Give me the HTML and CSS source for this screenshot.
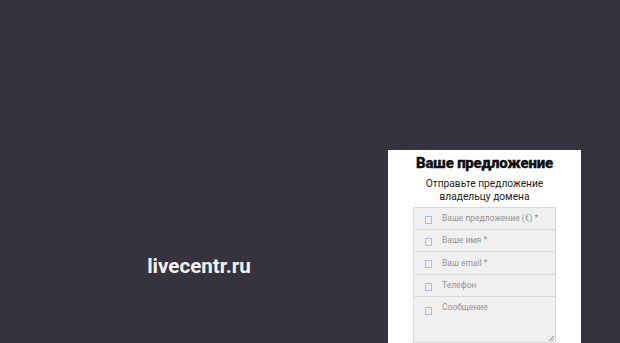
FILE: index.html
```html
<!DOCTYPE html>
<html lang="ru">
<head>
<meta charset="utf-8">
<link rel="stylesheet" href="styles.css">
</head>
<body>
<div class="page">
  <div class="left">
    <div class="domain">livecentr.ru</div>
  </div>
  <div class="card">
    <h1 class="title">Ваше предложение</h1>
    <p class="subtitle">Отправьте предложение<br>владельцу домена</p>
    <div class="form">
      <div class="field"><span class="ico"></span><span class="ph">Ваше предложение (€) *</span></div>
      <div class="field"><span class="ico"></span><span class="ph">Ваше имя *</span></div>
      <div class="field"><span class="ico"></span><span class="ph">Ваш email *</span></div>
      <div class="field"><span class="ico"></span><span class="ph">Телефон</span></div>
      <div class="field area"><span class="ico"></span><span class="ph">Сообщение</span>
        <svg class="grip" width="5" height="5" viewBox="0 0 5 5"><path d="M5 0 L0 5 M5 2.5 L2.5 5" stroke="#888" stroke-width="1"/></svg>
      </div>
    </div>
  </div>
</div>
</body>
</html>
```

FILE: styles.css
```css
html, body {
  margin: 0;
  padding: 0;
  background: #36333f;
}
.page {
  display: flex;
  width: 620px;
  height: 343px;
  overflow: hidden;
  font-family: Roboto, "Noto Sans", sans-serif;
}
.left {
  width: 388px;
  flex: none;
  display: flex;
  justify-content: center;
  padding-top: 254px;
  box-sizing: border-box;
  padding-left: 10px;
}
.domain {
  color: #f2f2f2;
  font-weight: 700;
  font-size: 20.6px;
  line-height: 24px;
  height: 24px;
}
.card {
  width: 193px;
  flex: none;
  margin-top: 150px;
  background: #ffffff;
  box-sizing: border-box;
  padding: 4px 25px 0;
  height: 200px;
}
.title {
  margin: 0;
  font-size: 15px;
  font-weight: 900;
  line-height: 19px;
  color: #111;
  text-align: center;
  letter-spacing: -0.2px;
  -webkit-text-stroke: 0.3px #111;
}
.subtitle {
  margin: 4px 0 0;
  font-size: 10.2px;
  line-height: 13px;
  color: #222;
  text-align: center;
}
.form {
  margin-top: 4px;
  display: flex;
  flex-direction: column;
}
.field {
  position: relative;
  display: flex;
  align-items: center;
  height: 22.5px;
  box-sizing: border-box;
  background: #f0f0f0;
  border: 1px solid #d9d9d9;
  border-top-width: 0;
  padding-left: 11px;
}
.field:first-child {
  border-top-width: 1px;
}
.ico {
  width: 5px;
  height: 6px;
  border: 1px solid #9fc2ef;
  flex: none;
  margin-top: 3px;
}
.ph {
  margin-left: 10px;
  font-size: 8.5px;
  color: #959595;
}
.field.area {
  height: 46px;
  align-items: flex-start;
  padding-top: 5px;
}
.field.area .ico {
  margin-top: 5px;
}
.grip {
  position: absolute;
  right: 1px;
  bottom: 1px;
}
```
